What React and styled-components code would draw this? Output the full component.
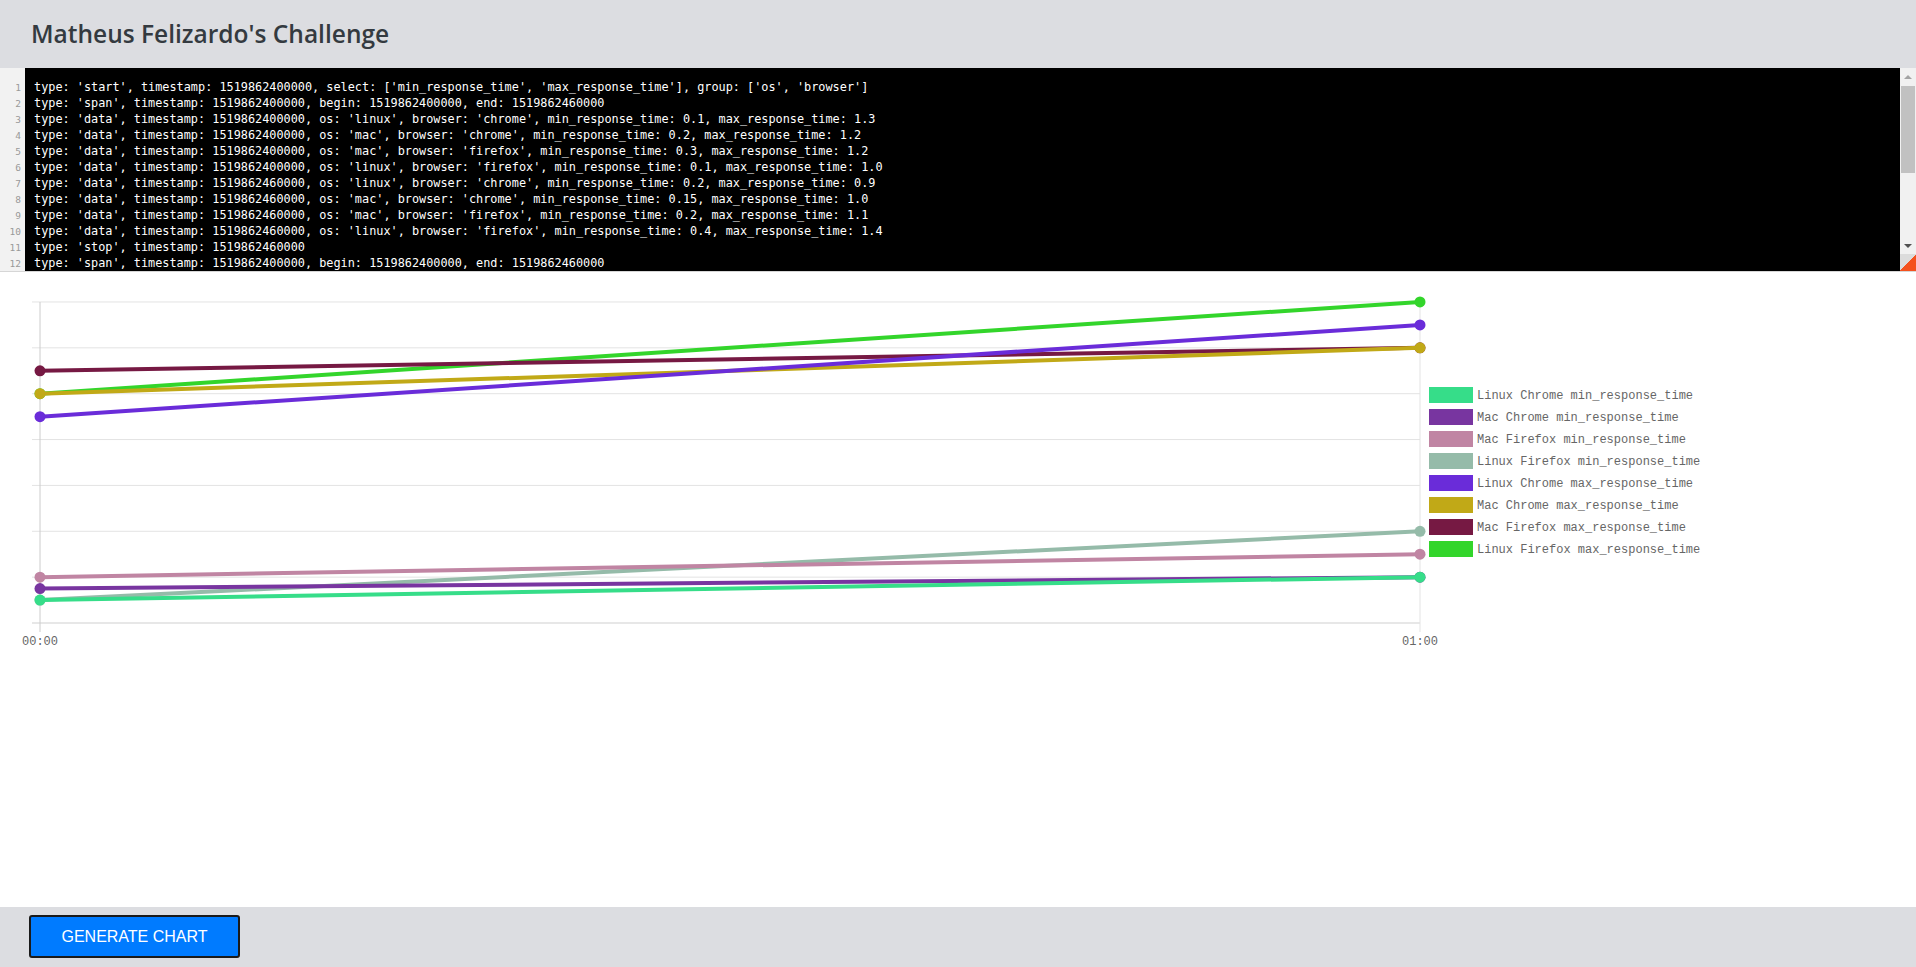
import styled, { createGlobalStyle } from "styled-components";

const GlobalStyle = createGlobalStyle`
    body {
        margin: 0;
        font-family: "Open Sans", "Liberation Sans", sans-serif;
        background: #fff;
    }
`;

const codeLines = [
    "type: 'start', timestamp: 1519862400000, select: ['min_response_time', 'max_response_time'], group: ['os', 'browser']",
    "type: 'span', timestamp: 1519862400000, begin: 1519862400000, end: 1519862460000",
    "type: 'data', timestamp: 1519862400000, os: 'linux', browser: 'chrome', min_response_time: 0.1, max_response_time: 1.3",
    "type: 'data', timestamp: 1519862400000, os: 'mac', browser: 'chrome', min_response_time: 0.2, max_response_time: 1.2",
    "type: 'data', timestamp: 1519862400000, os: 'mac', browser: 'firefox', min_response_time: 0.3, max_response_time: 1.2",
    "type: 'data', timestamp: 1519862400000, os: 'linux', browser: 'firefox', min_response_time: 0.1, max_response_time: 1.0",
    "type: 'data', timestamp: 1519862460000, os: 'linux', browser: 'chrome', min_response_time: 0.2, max_response_time: 0.9",
    "type: 'data', timestamp: 1519862460000, os: 'mac', browser: 'chrome', min_response_time: 0.15, max_response_time: 1.0",
    "type: 'data', timestamp: 1519862460000, os: 'mac', browser: 'firefox', min_response_time: 0.2, max_response_time: 1.1",
    "type: 'data', timestamp: 1519862460000, os: 'linux', browser: 'firefox', min_response_time: 0.4, max_response_time: 1.4",
    "type: 'stop', timestamp: 1519862460000",
    "type: 'span', timestamp: 1519862400000, begin: 1519862400000, end: 1519862460000",
];

// series values at 00:00 and 01:00, as drawn
const series = [
    { name: "Linux Chrome min_response_time", color: "#36dd89", values: [0.1, 0.2] },
    { name: "Mac Chrome min_response_time", color: "#7835a0", values: [0.15, 0.2] },
    { name: "Mac Firefox min_response_time", color: "#c085a3", values: [0.2, 0.3] },
    { name: "Linux Firefox min_response_time", color: "#95bba9", values: [0.1, 0.4] },
    { name: "Linux Chrome max_response_time", color: "#6a2cd9", values: [0.9, 1.3] },
    { name: "Mac Chrome max_response_time", color: "#c1a917", values: [1.0, 1.2] },
    { name: "Mac Firefox max_response_time", color: "#761943", values: [1.1, 1.2] },
    { name: "Linux Firefox max_response_time", color: "#33d52b", values: [1.0, 1.4] },
];

const X0 = 40;
const X1 = 1420;
const yOf = (v) => 351 - v * 229.3;
const ticks = [0, 0.2, 0.4, 0.6, 0.8, 1.0, 1.2, 1.4];

export default function App() {
    return (
        <Page>
            <GlobalStyle />
            <Header>
                <Title>Matheus Felizardo's Challenge</Title>
            </Header>
            <Editor>
                <Gutter>
                    {codeLines.map((_, i) => (
                        <LineNo key={i}>{i + 1}</LineNo>
                    ))}
                </Gutter>
                <Code>
                    {codeLines.map((line, i) => (
                        <CodeLine key={i}>{line}</CodeLine>
                    ))}
                </Code>
                <ScrollBar>
                    <ArrowBox>
                        <Arrow $up />
                    </ArrowBox>
                    <Track>
                        <Thumb />
                    </Track>
                    <ArrowBox>
                        <Arrow />
                    </ArrowBox>
                    <Corner />
                </ScrollBar>
            </Editor>
            <ChartArea>
                <ChartSvg width="1916" height="400" viewBox="0 0 1916 400">
                    {ticks.map((t) => (
                        <line
                            key={t}
                            x1="32"
                            x2={X1}
                            y1={yOf(t)}
                            y2={yOf(t)}
                            stroke={t === 0 ? "#cfcfcf" : "#e3e3e3"}
                            strokeWidth="1"
                        />
                    ))}
                    <line x1={X0} x2={X0} y1="30" y2="360" stroke="#cccccc" />
                    <line x1={X1} x2={X1} y1="30" y2="360" stroke="#e3e3e3" />
                    <AxisLabel x={X0} y="373" textAnchor="middle">00:00</AxisLabel>
                    <AxisLabel x={X1} y="373" textAnchor="middle">01:00</AxisLabel>
                    {[...series].reverse().map((s) => (
                        <g key={s.name}>
                            <line
                                x1={X0}
                                y1={yOf(s.values[0])}
                                x2={X1}
                                y2={yOf(s.values[1])}
                                stroke={s.color}
                                strokeWidth="4"
                            />
                            <circle cx={X0} cy={yOf(s.values[0])} r="5.5" fill={s.color} />
                            <circle cx={X1} cy={yOf(s.values[1])} r="5.5" fill={s.color} />
                        </g>
                    ))}
                    {series.map((s, i) => (
                        <g key={s.name}>
                            <rect x="1429" y={115 + i * 22} width="44" height="16" fill={s.color} />
                            <LegendText x="1477" y={127 + i * 22}>
                                {s.name}
                            </LegendText>
                        </g>
                    ))}
                </ChartSvg>
            </ChartArea>
            <Footer>
                <GenerateButton>GENERATE CHART</GenerateButton>
            </Footer>
        </Page>
    );
}

const Page = styled.div`
    display: flex;
    flex-direction: column;
    min-height: 100vh;
`;

const Header = styled.header`
    height: 68px;
    background: #dcdde1;
    display: flex;
    align-items: center;
    padding-left: 31px;
    box-sizing: border-box;
`;

const Title = styled.h1`
    margin: 0;
    font-family: "Open Sans", sans-serif;
    font-weight: 600;
    font-size: 24.5px;
    color: #343a40;
    padding-bottom: 2px;
`;

const Editor = styled.div`
    display: flex;
    height: 203px;
    border-bottom: 1px solid #d6d6d6;
    overflow: hidden;
`;

const Gutter = styled.div`
    width: 25px;
    background: #f2f2f2;
    padding-top: 11px;
    box-sizing: border-box;
    text-align: right;
    padding-right: 4px;
`;

const LineNo = styled.div`
    font-family: "DejaVu Sans Mono", monospace;
    font-size: 9.5px;
    line-height: 16px;
    height: 16px;
    color: #999;
    padding-top: 1px;
    box-sizing: border-box;
`;

const Code = styled.div`
    flex: 1;
    background: #000;
    color: #fff;
    padding: 11px 0 0 9px;
    overflow: hidden;
`;

const CodeLine = styled.div`
    font-family: "DejaVu Sans Mono", monospace;
    font-size: 11.85px;
    line-height: 16px;
    height: 16px;
    white-space: pre;
`;

const ScrollBar = styled.div`
    width: 16px;
    display: flex;
    flex-direction: column;
    background: #f1f1f1;
`;

const ArrowBox = styled.div`
    height: 17px;
    display: flex;
    align-items: center;
    justify-content: center;
`;

const Arrow = styled.div`
    width: 0;
    height: 0;
    border-left: 4px solid transparent;
    border-right: 4px solid transparent;
    ${(p) =>
        p.$up
            ? "border-bottom: 4px solid #a3a3a3;"
            : "border-top: 4px solid #505050;"}
`;

const Track = styled.div`
    flex: 1;
    padding: 1px 0 0 1px;
    box-sizing: border-box;
`;

const Thumb = styled.div`
    height: 87px;
    width: 14px;
    background: #c1c1c1;
`;

const Corner = styled.div`
    height: 17px;
    background: linear-gradient(to bottom right, #dcdcdc 50%, #f4511e 50%);
`;

const ChartArea = styled.main`
    flex: 1;
    background: #fff;
`;

const ChartSvg = styled.svg`
    display: block;
`;

const AxisLabel = styled.text`
    font-family: "Liberation Mono", monospace;
    font-size: 12px;
    fill: #666;
`;

const LegendText = styled.text`
    font-family: "Liberation Mono", monospace;
    font-size: 12px;
    fill: #666;
`;

const Footer = styled.footer`
    height: 60px;
    background: #dcdde1;
    display: flex;
    align-items: center;
    padding-left: 29px;
`;

const GenerateButton = styled.button`
    width: 211px;
    height: 43px;
    background: #007bff;
    color: #fff;
    border: 2px solid #1a1a1a;
    border-radius: 3px;
    font-family: "Liberation Sans", Arial, sans-serif;
    font-size: 16px;
    cursor: pointer;
    margin-top: -1px;
`;
